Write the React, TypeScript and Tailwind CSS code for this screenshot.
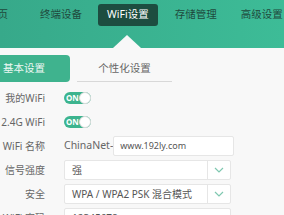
import React from "react";

const font = { fontFamily: '"Noto Sans", "Noto Sans CJK SC", sans-serif' };

function Toggle() {
  return (
    <div className="relative flex h-[12px] w-[27px] items-center rounded-full bg-[#3cb48e] pl-[2px]">
      <span className="text-[8px] font-bold leading-none text-white">ON</span>
      <span className="absolute right-0 top-1/2 h-[12px] w-[12px] -translate-y-1/2 rounded-full border border-[#dcdcdc] bg-white" />
    </div>
  );
}

function Chevron() {
  return (
    <svg width="10" height="6" viewBox="0 0 10 6" fill="none">
      <path d="M1 1l4 4 4-4" stroke="#7fc8b0" strokeWidth="1.2" />
    </svg>
  );
}

function Row({ label, children }: { label: string; children: React.ReactNode }) {
  return (
    <div className="flex h-[20px] items-center">
      <div className="w-[45px] shrink-0 text-right text-[10px] text-[#666]">{label}</div>
      <div className="ml-[19px] flex items-center">{children}</div>
    </div>
  );
}

function Select({ value }: { value: string }) {
  return (
    <div className="flex h-[20px] w-[167px] items-center rounded-[2px] border border-[#e6e6e6] bg-white">
      <span className="flex-1 pl-[7px] text-[10px] text-[#555]">{value}</span>
      <span className="flex h-full w-[23px] items-center justify-center border-l border-[#e6e6e6]">
        <Chevron />
      </span>
    </div>
  );
}

export default function App() {
  return (
    <div className="h-[215px] w-[284px] overflow-hidden bg-[#f8f8f8]" style={font}>
      <header className="relative flex h-[48px] items-start bg-gradient-to-r from-[#37a98a] to-[#3dbc97] pt-[4px]">
        <div className="flex items-center whitespace-nowrap text-[10.5px] text-[#1f4a3d]">
          <span className="-ml-[13px] w-[21px]">首页</span>
          <span className="ml-[32px] flex h-[22px] items-center">终端设备</span>
          <span className="ml-[16px] flex h-[22px] items-center rounded-[3px] bg-[#1d4d40] px-[9px] text-white">
            WiFi设置
          </span>
          <span className="ml-[17px] flex h-[22px] items-center">存储管理</span>
          <span className="ml-[24px] flex h-[22px] items-center">高级设置</span>
        </div>
        <span className="absolute bottom-0 left-[113px] h-0 w-0 border-x-[14px] border-b-[13px] border-x-transparent border-b-[#f8f8f8]" />
      </header>

      <div className="mt-[7px] flex items-end">
        <div className="flex h-[27px] w-[70px] items-center rounded-r-[4px] bg-[#3fb38e] pl-[3px] text-[10.5px] text-[#eef8f4]">
          基本设置
        </div>
        <div className="ml-[7px] flex h-[26px] w-[95px] items-center justify-center border-b border-[#d8d8d8] text-[10.5px] text-[#666]">
          个性化设置
        </div>
      </div>

      <div className="mt-[6px] flex flex-col gap-[4px]">
        <Row label="我的WiFi">
          <Toggle />
        </Row>
        <Row label="2.4G WiFi">
          <Toggle />
        </Row>
        <Row label="WiFi 名称">
          <span className="text-[10.5px] text-[#666]">ChinaNet-</span>
          <div className="flex h-[20px] w-[121px] items-center rounded-[2px] border border-[#e6e6e6] bg-white pl-[6px] text-[9px] text-[#555]">
            www.192ly.com
          </div>
        </Row>
        <Row label="信号强度">
          <Select value="强" />
        </Row>
        <Row label="安全">
          <Select value="WPA / WPA2 PSK 混合模式" />
        </Row>
        <Row label="WiFi 密码">
          <div className="flex h-[20px] w-[167px] items-center rounded-[2px] border border-[#e6e6e6] bg-white pl-[7px] text-[10px] text-[#555]">
            12345678
          </div>
        </Row>
      </div>
    </div>
  );
}
